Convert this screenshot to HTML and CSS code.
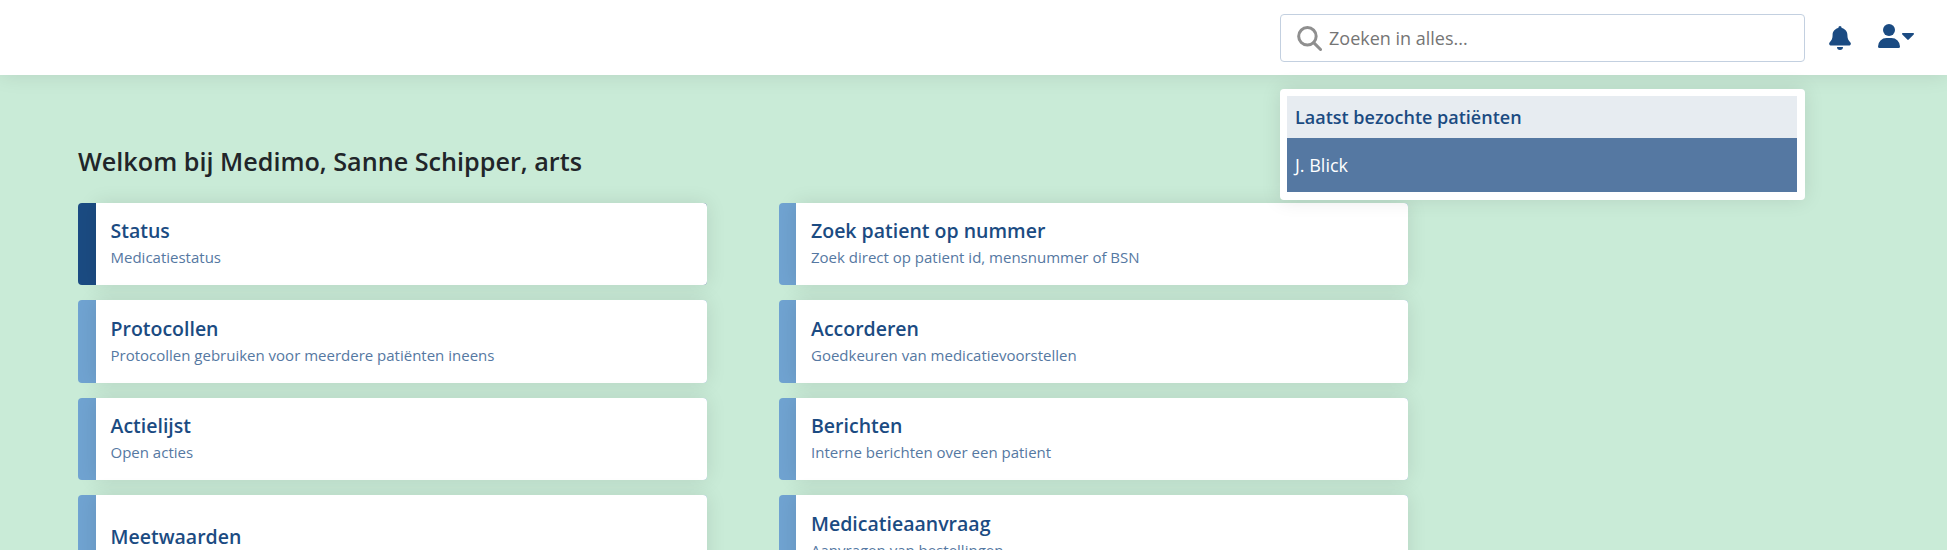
FILE: index.html
```html
<!DOCTYPE html>
<html lang="nl">
<head>
<meta charset="utf-8">
<title>Medimo</title>
<link rel="stylesheet" href="styles.css">
</head>
<body>
<header class="topbar">
  <div class="search">
    <label class="search-box">
      <svg class="search-icon" viewBox="0 0 24 24"><circle cx="10" cy="9.900" r="8.400" fill="none" stroke="#8f8f8f" stroke-width="2.900"/><path d="M16 16L22.600 22.600" stroke="#8f8f8f" stroke-width="2.900" stroke-linecap="round"/></svg>
      <input class="search-input" type="text" placeholder="Zoeken in alles...">
    </label>
    <div class="results">
      <div class="results-title">Laatst bezochte patiënten</div>
      <div class="results-item">J. Blick</div>
    </div>
  </div>
  <svg class="bell" viewBox="0 0 22 24"><path d="M11 0a1.600 1.600 0 0 0-1.600 1.600v.4C5.800 2.700 3.600 5.600 3.600 9.100c0 3.400-.8 5.200-3 7.500C-.3 17.700.2 19.400 1.500 19.400h19c1.300 0 1.800-1.700.9-2.800-2.200-2.300-3-4.100-3-7.500 0-3.500-2.200-6.400-5.800-7.100v-.4A1.600 1.600 0 0 0 11 0zM8 21h6a3 3 0 0 1-6 0z"/></svg>
  <div class="account">
    <svg class="user" viewBox="0 0 22 24"><circle cx="11" cy="6" r="6"/><path d="M8.500 14h5A8.500 8.500 0 0 1 22 22.500a1.500 1.500 0 0 1-1.500 1.500h-19A1.500 1.500 0 0 1 0 22.500 8.500 8.500 0 0 1 8.500 14z"/></svg>
    <svg class="caret" viewBox="0 0 12 8"><path d="M1 0h10c.9 0 1.300 1 .7 1.600l-5 5a1 1 0 0 1-1.400 0l-5-5C-.3 1 .1 0 1 0z"/></svg>
  </div>
</header>
<main class="page">
  <h1 class="welcome">Welkom bij Medimo, Sanne Schipper, arts</h1>
  <div class="columns">
    <div class="column">
      <a class="card card-primary"><span class="card-body"><b class="card-title">Status</b><span class="card-text">Medicatiestatus</span></span></a>
      <a class="card"><span class="card-body"><b class="card-title">Protocollen</b><span class="card-text">Protocollen gebruiken voor meerdere patiënten ineens</span></span></a>
      <a class="card"><span class="card-body"><b class="card-title">Actielijst</b><span class="card-text">Open acties</span></span></a>
      <a class="card"><span class="card-body card-body-single"><b class="card-title">Meetwaarden</b></span></a>
    </div>
    <div class="column column-right">
      <a class="card"><span class="card-body"><b class="card-title">Zoek patient op nummer</b><span class="card-text">Zoek direct op patient id, mensnummer of BSN</span></span></a>
      <a class="card"><span class="card-body"><b class="card-title">Accorderen</b><span class="card-text">Goedkeuren van medicatievoorstellen</span></span></a>
      <a class="card"><span class="card-body"><b class="card-title">Berichten</b><span class="card-text">Interne berichten over een patient</span></span></a>
      <a class="card"><span class="card-body"><b class="card-title">Medicatieaanvraag</b><span class="card-text">Aanvragen van bestellingen</span></span></a>
    </div>
  </div>
</main>
</body>
</html>
```
FILE: styles.css
```css
* { box-sizing: border-box; }
body {
  margin: 0;
  height: 550px;
  overflow: hidden;
  background: #c9ebd7;
  color: #212529;
  font-family: "Open Sans", "Noto Sans", sans-serif;
}
.topbar {
  position: relative;
  z-index: 2;
  display: flex;
  align-items: flex-start;
  justify-content: flex-end;
  height: 75px;
  padding: 14px 33px 0 0;
  background: #fff;
  box-shadow: 0 0 20px rgba(0, 0, 0, .1);
}
.search { position: relative; width: 525px; }
.search-box {
  display: flex;
  align-items: center;
  gap: 7px;
  height: 48px;
  padding: 0 16px;
  border: 1px solid #c3d0e0;
  border-radius: 4px;
}
.search-icon { width: 25px; height: 25px; }
.search-input {
  flex: 1;
  border: 0;
  padding: 0;
  outline: 0;
  background: none;
  font: 18px "Open Sans", "Noto Sans", sans-serif;
}
.search-input::placeholder { color: #757575; }
.results {
  position: absolute;
  top: 75px;
  left: 0;
  width: 525px;
  height: 111px;
  padding: 7px 8px 8px 7px;
  border-radius: 4px;
  background: #fff;
  box-shadow: 0 0 20px rgba(0, 0, 0, .1);
}
.results-title {
  height: 42px;
  padding-left: 8px;
  background: #e7ecf1;
  color: #1b4b82;
  font-size: 18px;
  font-weight: 600;
  line-height: 42px;
}
.results-item {
  height: 54px;
  padding-left: 8px;
  background: #5578a2;
  color: #fff;
  font-size: 18px;
  line-height: 54px;
}
.bell, .user, .caret { fill: #1b4b82; }
.bell { width: 22px; height: 24px; margin: 12px 27px 0 24px; }
.account { display: flex; gap: 2px; margin-top: 10px; }
.user { width: 22px; height: 24px; }
.caret { width: 12px; height: 8px; margin-top: 9px; }
.page { padding: 66px 0 0 78px; }
.welcome {
  height: 62px;
  margin: 0;
  font-size: 25.200px;
  font-weight: 600;
  line-height: 40px;
}
.columns { display: flex; gap: 72px; }
.column { display: flex; flex-direction: column; gap: 15px; width: 629px; }
.card {
  display: flex;
  height: 82.300px;
  padding-left: 18px;
  border-radius: 4px;
  background: #70a3d1;
}
.card-primary { background: #1b4b82; }
.card-body {
  flex: 1;
  padding: 13px 0 0 14.500px;
  border-radius: 0 4px 4px 0;
  background: #fff;
  box-shadow: 0 0 20px rgba(0, 0, 0, .1);
}
.card:nth-child(even) .card-body { padding-top: 14px; }
.card:nth-child(even) .card-body-single { padding-top: 27px; }
.column-right .card { padding-left: 17px; }
.column-right .card-body { padding-left: 15px; }
.card-title { display: block; color: #1b4b82; font-size: 19.500px; font-weight: 600; line-height: 29px; }
.card-text { display: block; color: #5578a2; font-size: 15px; line-height: 25px; }
```
